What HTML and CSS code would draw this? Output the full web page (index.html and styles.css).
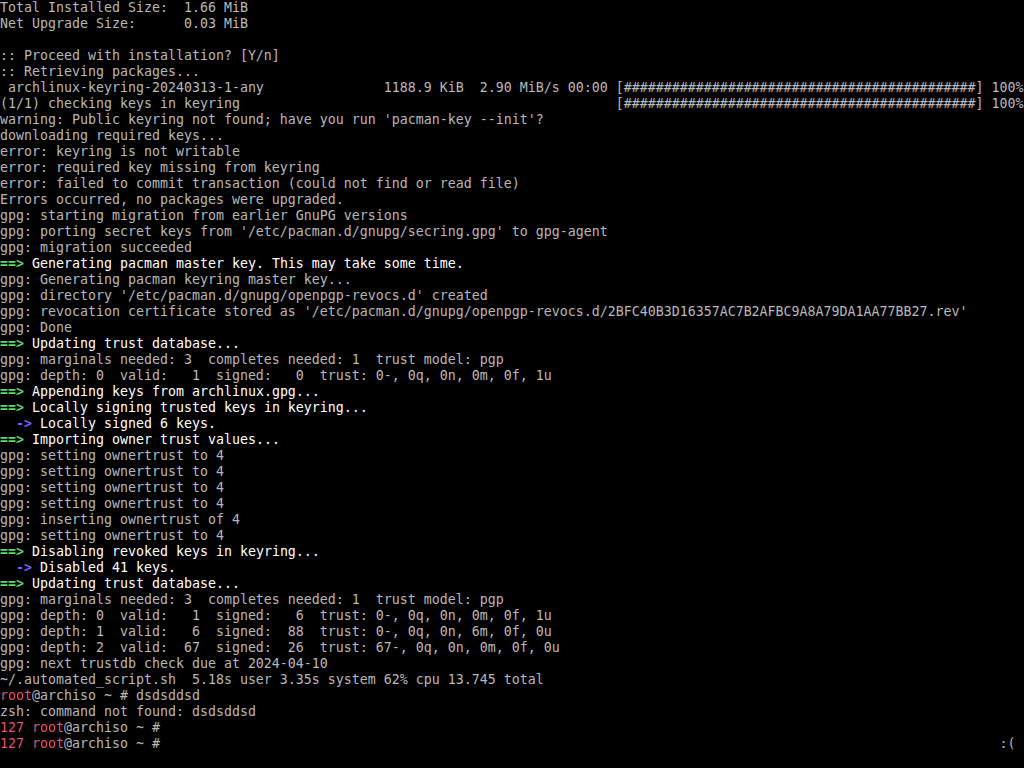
FILE: index.html
```html
<!DOCTYPE html>
<html>
<head>
<meta charset="utf-8">
<link rel="stylesheet" href="styles.css">
</head>
<body>
<pre class="console">Total Installed Size:  1.66 MiB
Net Upgrade Size:      0.03 MiB

:: Proceed with installation? [Y/n]
:: Retrieving packages...
 archlinux-keyring-20240313-1-any               1188.9 KiB  2.90 MiB/s 00:00 [############################################] 100%
(1/1) checking keys in keyring                                               [############################################] 100%
warning: Public keyring not found; have you run 'pacman-key --init'?
downloading required keys...
error: keyring is not writable
error: required key missing from keyring
error: failed to commit transaction (could not find or read file)
Errors occurred, no packages were upgraded.
gpg: starting migration from earlier GnuPG versions
gpg: porting secret keys from '/etc/pacman.d/gnupg/secring.gpg' to gpg-agent
gpg: migration succeeded
<span class="g">==&gt;</span> <span class="w">Generating pacman master key. This may take some time.</span>
gpg: Generating pacman keyring master key...
gpg: directory '/etc/pacman.d/gnupg/openpgp-revocs.d' created
gpg: revocation certificate stored as '/etc/pacman.d/gnupg/openpgp-revocs.d/2BFC40B3D16357AC7B2AFBC9A8A79DA1AA77BB27.rev'
gpg: Done
<span class="g">==&gt;</span> <span class="w">Updating trust database...</span>
gpg: marginals needed: 3  completes needed: 1  trust model: pgp
gpg: depth: 0  valid:   1  signed:   0  trust: 0-, 0q, 0n, 0m, 0f, 1u
<span class="g">==&gt;</span> <span class="w">Appending keys from archlinux.gpg...</span>
<span class="g">==&gt;</span> <span class="w">Locally signing trusted keys in keyring...</span>
  <span class="bl">-&gt;</span> <span class="w">Locally signed 6 keys.</span>
<span class="g">==&gt;</span> <span class="w">Importing owner trust values...</span>
gpg: setting ownertrust to 4
gpg: setting ownertrust to 4
gpg: setting ownertrust to 4
gpg: setting ownertrust to 4
gpg: inserting ownertrust of 4
gpg: setting ownertrust to 4
<span class="g">==&gt;</span> <span class="w">Disabling revoked keys in keyring...</span>
  <span class="bl">-&gt;</span> <span class="w">Disabled 41 keys.</span>
<span class="g">==&gt;</span> <span class="w">Updating trust database...</span>
gpg: marginals needed: 3  completes needed: 1  trust model: pgp
gpg: depth: 0  valid:   1  signed:   6  trust: 0-, 0q, 0n, 0m, 0f, 1u
gpg: depth: 1  valid:   6  signed:  88  trust: 0-, 0q, 0n, 6m, 0f, 0u
gpg: depth: 2  valid:  67  signed:  26  trust: 67-, 0q, 0n, 0m, 0f, 0u
gpg: next trustdb check due at 2024-04-10
~/.automated_script.sh  5.18s user 3.35s system 62% cpu 13.745 total
<span class="r">root</span>@archiso ~ # dsdsddsd
zsh: command not found: dsdsddsd
<span class="r">127</span> <span class="r">root</span>@archiso ~ #
<span class="r">127</span> <span class="r">root</span>@archiso ~ #                                                                                                         :(
</pre>
</body>
</html>
```

FILE: styles.css
```css
html, body {
  margin: 0;
  padding: 0;
  background: #000;
  width: 1024px;
  height: 768px;
  overflow: hidden;
}

.console {
  margin: 0;
  padding: 0;
  font-family: "DejaVu Sans Mono", "Liberation Mono", monospace;
  font-size: 13.29px;
  line-height: 16px;
  color: #b8b8b8;
  white-space: pre;
}

.w {
  color: #ffffff;
}

.g {
  color: #5fd65f;
  font-weight: bold;
}

.bl {
  color: #6a6aff;
  font-weight: bold;
}

.r {
  color: #e0556a;
}
```
